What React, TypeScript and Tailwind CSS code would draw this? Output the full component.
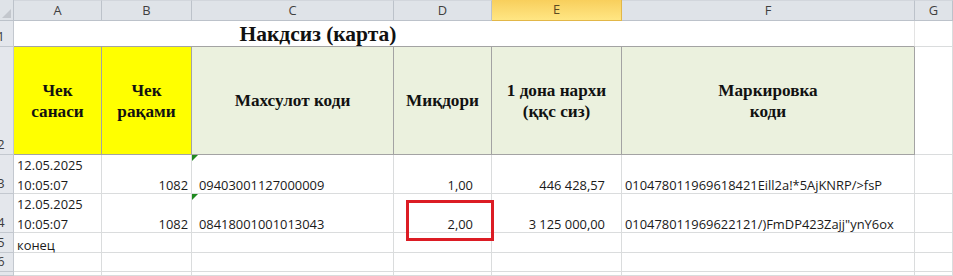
import React from "react";

const GRID = "border-r border-b border-[#dadcdd]";
const HDRB = "border-r border-b border-[#a3a3a3]";

function RH({ n }: { n?: string }) {
  return (
    <div className="bg-[#e4e7ec] border-r border-b border-[#c3c8cf] overflow-hidden flex items-end">
      <span className="w-[30px] shrink-0 ml-[-14px] text-center text-[#3c3c3c] leading-[19px]">{n}</span>
    </div>
  );
}

function CH({ l, sel }: { l: string; sel?: boolean }) {
  return sel ? (
    <div className="bg-gradient-to-b from-[#f8cf5c] to-[#ffe683] border-r border-b border-[#e2b748] flex items-center justify-center text-[#5a4a22]">
      {l}
    </div>
  ) : (
    <div className="bg-[#dfe3e8] border-r border-b border-[#bcc2ca] border-t border-t-[#d2d6dc] flex items-center justify-center text-[#3f3f3f]">
      {l}
    </div>
  );
}

function Tri() {
  return (
    <svg className="absolute left-0 top-0" width="6" height="6" viewBox="0 0 6 6">
      <polygon points="0,0 6,0 0,6" fill="#1f8a1f" />
    </svg>
  );
}

export default function App() {
  const serif = "font-['Liberation_Serif',serif] font-bold text-[17.2px] leading-[21px] text-[#111]";
  const dl = "leading-[20px] mb-[-2px]";
  return (
    <div className="relative w-[953px] h-[276px] overflow-hidden bg-white font-['Open_Sans',sans-serif] text-[12.9px] text-[#1a1a1a]">
      <div className="grid grid-cols-[14px_88px_90px_202px_98px_130px_293px_38px] grid-rows-[21px_26px_108px_39px_39px_20px_19px_4px]">
        {/* header row */}
        <div className="bg-[#dfe3e8] border-r border-b border-[#bcc2ca] relative">
          <svg className="absolute right-[2px] bottom-[2px]" width="9" height="9" viewBox="0 0 9 9">
            <polygon points="9,0 9,9 0,9" fill="#c3c7cd" />
          </svg>
        </div>
        <CH l="A" />
        <CH l="B" />
        <CH l="C" />
        <CH l="D" />
        <CH l="E" sel />
        <CH l="F" />
        <CH l="G" />

        {/* row 1 */}
        <RH n="1" />
        <div className="col-span-5 bg-white border-b border-[#a3a3a3] flex items-center justify-center font-['Liberation_Serif',serif] font-bold text-[21.5px] text-[#111] pt-[1px]">
          Накдсиз (карта)
        </div>
        <div className="bg-white border-b border-[#a3a3a3] border-r border-r-[#e3e3e3]" />
        <div className={GRID} />

        {/* row 2 */}
        <RH n="2" />
        <div className={`bg-[#ffff00] ${HDRB} flex items-center justify-center text-center ${serif}`}>
          Чек<br />санаси
        </div>
        <div className={`bg-[#ffff00] ${HDRB} flex items-center justify-center text-center ${serif}`}>
          Чек<br />рақами
        </div>
        <div className={`bg-[#ebf1de] ${HDRB} flex items-center justify-center text-center ${serif}`}>
          Махсулот коди
        </div>
        <div className={`bg-[#ebf1de] ${HDRB} flex items-center justify-center text-center ${serif}`}>
          Миқдори
        </div>
        <div className={`bg-[#ebf1de] ${HDRB} flex items-center justify-center text-center ${serif}`}>
          1 дона нархи<br />(ққс сиз)
        </div>
        <div className={`bg-[#ebf1de] ${HDRB} flex items-center justify-center text-center ${serif}`}>
          Маркировка<br />коди
        </div>
        <div className={GRID} />

        {/* row 3 */}
        <RH n="3" />
        <div className={`${GRID} flex items-end pl-[3px]`}>
          <span className={dl}>12.05.2025<br />10:05:07</span>
        </div>
        <div className={`${GRID} flex items-end justify-end pr-[3px]`}><span className={dl}>1082</span></div>
        <div className={`${GRID} relative flex items-end pl-[7px]`}>
          <Tri />
          <span className={dl}>09403001127000009</span>
        </div>
        <div className={`${GRID} flex items-end justify-end pr-[18px]`}><span className={dl}>1,00</span></div>
        <div className={`${GRID} flex items-end justify-end pr-[16px]`}><span className={dl}>446 428,57</span></div>
        <div className={`${GRID} flex items-end pl-[3px]`}><span className={dl}>010478011969618421Eill2a!*5AjKNRP/&gt;fsP</span></div>
        <div className={GRID} />

        {/* row 4 */}
        <RH n="4" />
        <div className={`${GRID} flex items-end pl-[3px]`}>
          <span className={dl}>12.05.2025<br />10:05:07</span>
        </div>
        <div className={`${GRID} flex items-end justify-end pr-[3px]`}><span className={dl}>1082</span></div>
        <div className={`${GRID} relative flex items-end pl-[7px]`}>
          <Tri />
          <span className={dl}>08418001001013043</span>
        </div>
        <div className={`${GRID} flex items-end justify-end pr-[18px]`}><span className={dl}>2,00</span></div>
        <div className={`${GRID} flex items-end justify-end pr-[16px]`}><span className={dl}>3 125 000,00</span></div>
        <div className={`${GRID} flex items-end pl-[3px]`}><span className={dl}>010478011969622121/)FmDP423Zajj"ynY6ox</span></div>
        <div className={GRID} />

        {/* row 5 */}
        <RH n="5" />
        <div className={`${GRID} flex items-end pl-[3px]`}><span className="leading-[20px] mb-[-3px]">конец</span></div>
        <div className={GRID} />
        <div className={GRID} />
        <div className={GRID} />
        <div className={GRID} />
        <div className={GRID} />
        <div className={GRID} />

        {/* row 6 */}
        <RH n="6" />
        <div className={GRID} />
        <div className={GRID} />
        <div className={GRID} />
        <div className={GRID} />
        <div className={GRID} />
        <div className={GRID} />
        <div className={GRID} />

        {/* row 7 */}
        <RH />
        <div className={GRID} />
        <div className={GRID} />
        <div className={GRID} />
        <div className={GRID} />
        <div className={GRID} />
        <div className={GRID} />
        <div className={GRID} />
      </div>

      <div className="absolute left-[406px] top-[200px] w-[88px] h-[41px] border-[3px] border-[#dc1c24]" />
    </div>
  );
}
